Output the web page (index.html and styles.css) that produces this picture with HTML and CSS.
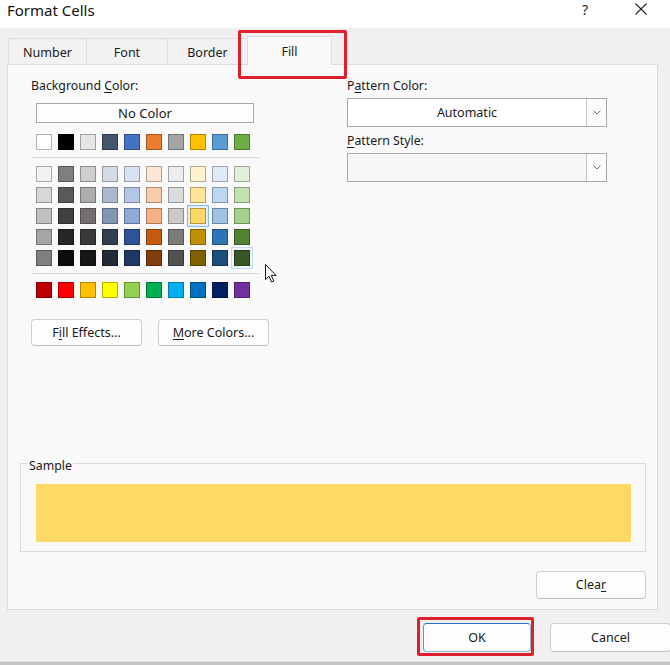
FILE: index.html
```html
<!DOCTYPE html>
<html>
<head>
<meta charset="utf-8">
<link rel="stylesheet" href="styles.css">
</head>
<body>
<div class="dialog">
  <div class="titlebar">
    <span class="title">Format Cells</span>
    <span class="help">?</span>
    <span class="close"><svg width="12" height="12" viewBox="0 0 12 12"><path d="M0.5 0.5 L11.5 11.5 M11.5 0.5 L0.5 11.5" stroke="#222" stroke-width="1.1" fill="none"/></svg></span>
  </div>
  <div class="tabs">
    <div class="tab tab-number">Number</div>
    <div class="tab tab-font">Font</div>
    <div class="tab tab-border">Border</div>
    <div class="tab tab-fill active">Fill</div>
  </div>
  <div class="panel">
    <div class="cols">
      <div class="left">
        <div class="label">Background <u>C</u>olor:</div>
        <div class="btn nocolor">No Color</div>
        <div class="swatches">
          <span class="sw" style="background:#FFFFFF"></span><span class="sw" style="background:#000000"></span><span class="sw" style="background:#E7E6E6"></span><span class="sw" style="background:#44546A"></span><span class="sw" style="background:#4472C4"></span><span class="sw" style="background:#ED7D31"></span><span class="sw" style="background:#A5A5A5"></span><span class="sw" style="background:#FFC000"></span><span class="sw" style="background:#5B9BD5"></span><span class="sw" style="background:#70AD47"></span>
        </div>
        <div class="sep"></div>
        <div class="swatches">
          <span class="sw" style="background:#F2F2F2"></span><span class="sw" style="background:#7F7F7F"></span><span class="sw" style="background:#D0CECE"></span><span class="sw" style="background:#D6DCE4"></span><span class="sw" style="background:#D9E2F3"></span><span class="sw" style="background:#FBE5D5"></span><span class="sw" style="background:#EDEDED"></span><span class="sw" style="background:#FFF2CC"></span><span class="sw" style="background:#DEEBF6"></span><span class="sw" style="background:#E2EFD9"></span>
          <span class="sw" style="background:#D8D8D8"></span><span class="sw" style="background:#595959"></span><span class="sw" style="background:#AEABAB"></span><span class="sw" style="background:#ADB9CA"></span><span class="sw" style="background:#B4C6E7"></span><span class="sw" style="background:#F7CBAC"></span><span class="sw" style="background:#DBDBDB"></span><span class="sw" style="background:#FEE599"></span><span class="sw" style="background:#BDD7EE"></span><span class="sw" style="background:#C5E0B3"></span>
          <span class="sw" style="background:#BFBFBF"></span><span class="sw" style="background:#3F3F3F"></span><span class="sw" style="background:#757070"></span><span class="sw" style="background:#8496B0"></span><span class="sw" style="background:#8EAADB"></span><span class="sw" style="background:#F4B183"></span><span class="sw" style="background:#C9C9C9"></span><span class="sw selected" style="background:#FFD965"></span><span class="sw" style="background:#9DC3E6"></span><span class="sw" style="background:#A8D08D"></span>
          <span class="sw" style="background:#A5A5A5"></span><span class="sw" style="background:#262626"></span><span class="sw" style="background:#3A3838"></span><span class="sw" style="background:#323F4F"></span><span class="sw" style="background:#2F5496"></span><span class="sw" style="background:#C55A11"></span><span class="sw" style="background:#7B7B7B"></span><span class="sw" style="background:#BF9000"></span><span class="sw" style="background:#2E75B5"></span><span class="sw" style="background:#538135"></span>
          <span class="sw" style="background:#7F7F7F"></span><span class="sw" style="background:#0C0C0C"></span><span class="sw" style="background:#171616"></span><span class="sw" style="background:#222A35"></span><span class="sw" style="background:#1F3864"></span><span class="sw" style="background:#833C0B"></span><span class="sw" style="background:#525252"></span><span class="sw" style="background:#7F6000"></span><span class="sw" style="background:#1E4E79"></span><span class="sw hover" style="background:#375623"></span>
        </div>
        <div class="sep"></div>
        <div class="swatches">
          <span class="sw" style="background:#C00000"></span><span class="sw" style="background:#FF0000"></span><span class="sw" style="background:#FFC000"></span><span class="sw" style="background:#FFFF00"></span><span class="sw" style="background:#92D050"></span><span class="sw" style="background:#00B050"></span><span class="sw" style="background:#00B0F0"></span><span class="sw" style="background:#0070C0"></span><span class="sw" style="background:#002060"></span><span class="sw" style="background:#7030A0"></span>
        </div>
        <div class="btnrow">
          <div class="btn wide">F<u>i</u>ll Effects...</div>
          <div class="btn wide"><u>M</u>ore Colors...</div>
        </div>
      </div>
      <div class="right">
        <div class="label">P<u>a</u>ttern Color:</div>
        <div class="dropdown">
          <div class="dd-value">Automatic</div>
          <div class="dd-arrow"><svg width="8" height="5" viewBox="0 0 8 5"><path d="M0.5 0.5 L4 4 L7.5 0.5" stroke="#777" stroke-width="1" fill="none"/></svg></div>
        </div>
        <div class="label label-gap"><u>P</u>attern Style:</div>
        <div class="dropdown disabled">
          <div class="dd-value"></div>
          <div class="dd-arrow"><svg width="8" height="5" viewBox="0 0 8 5"><path d="M0.5 0.5 L4 4 L7.5 0.5" stroke="#777" stroke-width="1" fill="none"/></svg></div>
        </div>
      </div>
    </div>
    <fieldset class="sample">
      <legend>Sample</legend>
      <div class="sample-fill"></div>
    </fieldset>
    <div class="clear-row">
      <div class="btn clear">Clea<u>r</u></div>
    </div>
  </div>
  <div class="footer">
    <div class="btn ok">OK</div>
    <div class="btn cancel">Cancel</div>
  </div>
  <div class="mark mark-fill"></div>
  <div class="mark mark-ok"></div>
  <svg class="cursor" width="13" height="19" viewBox="0 0 13 19"><path d="M0.5 0.5 L0.5 15.5 L4 12.2 L6.6 18 L8.8 17 L6.3 11.4 L11 11.4 Z" fill="#fff" stroke="#111" stroke-width="1" stroke-linejoin="round"/></svg>
</div>
</body>
</html>
```

FILE: styles.css
```css
* { box-sizing: border-box; }
html, body { margin: 0; padding: 0; }
body {
  background: linear-gradient(#8f8f8f, #c4c4c4);
  font-family: "Noto Sans", "Open Sans", sans-serif;
  font-size: 12px;
  color: #1a1a1a;
  width: 670px;
  height: 665px;
  overflow: hidden;
}
u { text-decoration: underline; text-underline-offset: 2px; }

.dialog {
  position: relative;
  width: 670px;
  height: 662px;
  background: #f0f0f0;
  border-bottom: 1px solid #e4e4e4;
}

.titlebar {
  height: 28px;
  background: #ffffff;
  display: flex;
  align-items: flex-start;
}
.title {
  font-size: 15px;
  line-height: 20px;
  padding-left: 7px;
  color: #111;
}
.help {
  margin-left: auto;
  font-size: 14px;
  line-height: 20px;
  color: #222;
  margin-right: 47px;
}
.close {
  display: block;
  width: 12px;
  height: 12px;
  margin-top: 3px;
  margin-right: 23px;
}
.close svg { display: block; }

.tabs {
  height: 36px;
  display: flex;
  align-items: flex-end;
  padding-left: 8px;
}
.tab {
  height: 26px;
  line-height: 27px;
  text-align: center;
  font-size: 12.5px;
  color: #1a1a1a;
  background: #f2f2f2;
  border: 1px solid #dcdcdc;
  border-bottom: none;
  margin-right: -1px;
}
.tab-number { width: 79px; }
.tab-font { width: 82px; }
.tab-border { width: 81px; }
.tab-fill { width: 85px; }
.tab.active {
  height: 29px;
  line-height: 30px;
  background: #f9f9f9;
  position: relative;
  z-index: 2;
  margin-bottom: -1px;
}

.panel {
  margin-left: 7px;
  width: 651px;
  height: 546px;
  background: #f9f9f9;
  border: 1px solid #dcdcdc;
  position: relative;
  z-index: 1;
}
.cols {
  display: grid;
  grid-template-columns: 316px 260px;
  padding: 13px 0 0 23px;
}
.label {
  line-height: 16px;
  height: 16px;
  font-size: 12.3px;
  color: #1a1a1a;
}
.label-gap { margin-top: 6px; }

.btn {
  background: #fdfdfd;
  border: 1px solid #cfcfcf;
  border-bottom-color: #bdbdbd;
  border-radius: 4px;
  text-align: center;
  font-size: 12.5px;
  color: #1a1a1a;
}
.nocolor {
  margin: 9px 0 0 5px;
  width: 218px;
  height: 20px;
  line-height: 18px;
  border-radius: 0;
  border-color: #a8a8a8;
  font-size: 13px;
}

.swatches {
  display: grid;
  grid-template-columns: repeat(10, 16px);
  column-gap: 6px;
  row-gap: 5px;
  margin-left: 5px;
}
.nocolor + .swatches { margin-top: 11px; }
.sw {
  display: block;
  width: 16px;
  height: 16px;
  border: 1px solid rgba(0, 0, 0, 0.3);
}
.sw.selected {
  box-shadow: 0 0 0 2px #e2eefa, 0 0 0 3px #8dbbe6;
}
.sw.hover {
  box-shadow: 0 0 0 2px #eef5fc, 0 0 0 3px #c3dcf1;
}
.sep {
  width: 228px;
  height: 1px;
  background: #d9d9d9;
  margin: 7px 0 8px 0;
}

.btnrow {
  display: flex;
  gap: 16px;
  margin-top: 21px;
}
.btn.wide {
  width: 111px;
  height: 27px;
  line-height: 25px;
}

.dropdown {
  margin-top: 4px;
  width: 260px;
  height: 29px;
  display: flex;
  background: #ffffff;
  border: 1px solid #a9a9a9;
}
.dropdown.disabled { background: #f7f7f7; }
.dd-value {
  flex: 1;
  line-height: 27px;
  text-align: center;
  font-size: 12.5px;
}
.dd-arrow {
  width: 20px;
  border-left: 1px solid #c6c6c6;
  background: #fbfbfb;
  display: flex;
  align-items: center;
  justify-content: center;
}
.dd-arrow svg { display: block; }

.sample {
  margin: 107px 11px 0 12px;
  padding: 10px 14px 9px 15px;
  border: 1px solid #dadada;
  min-width: 0;
}
.sample legend {
  padding: 5px 1px 0 1px;
  margin-left: -8px;
  font-size: 12.3px;
  line-height: 16px;
  color: #1a1a1a;
}
.sample-fill {
  height: 58px;
  background: #FFD966;
}

.clear-row {
  display: flex;
  justify-content: flex-end;
  padding-right: 11px;
  margin-top: 19px;
}
.btn.clear {
  width: 110px;
  height: 28px;
  line-height: 26px;
}

.footer {
  display: flex;
  justify-content: flex-end;
  gap: 19px;
  padding-top: 13px;
  margin-right: -1px;
}
.btn.ok {
  width: 108px;
  height: 29px;
  line-height: 27px;
  border-color: #8fb3d9;
  border-top-color: #2b73c2;
  border-left-color: #5c93cf;
}
.btn.cancel {
  width: 121px;
  height: 29px;
  line-height: 27px;
}

.mark {
  position: absolute;
  border: 3px solid #e01f2d;
  border-radius: 2px;
  z-index: 5;
}
.mark-fill { left: 238px; top: 30px; width: 109px; height: 49px; }
.mark-ok { left: 417px; top: 617px; width: 117px; height: 39px; }

.cursor {
  position: absolute;
  left: 265px;
  top: 264px;
  z-index: 6;
}
```
